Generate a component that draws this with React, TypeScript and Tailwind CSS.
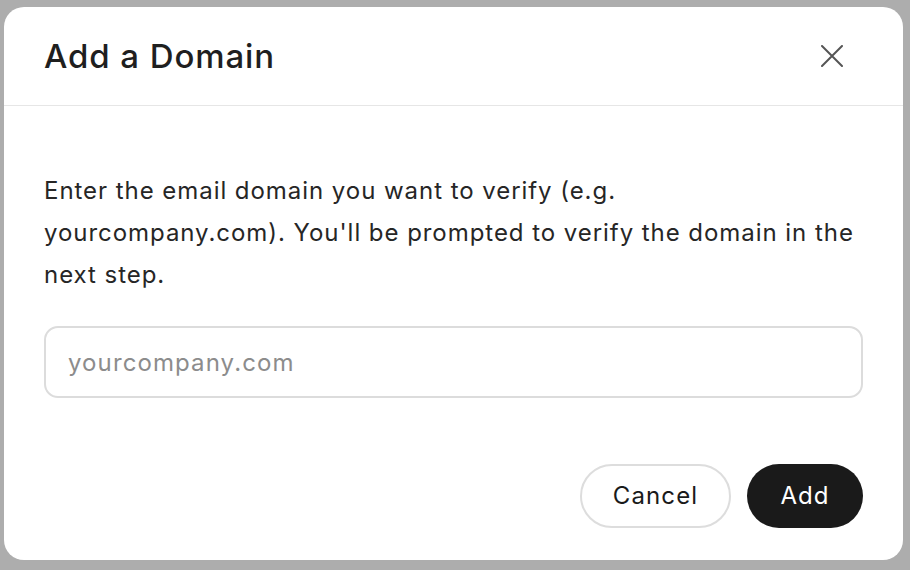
import React, { useState } from 'react';

const App: React.FC = () => {
  const [domain, setDomain] = useState('');

  return (
    <div
      className="w-[910px] h-[570px] bg-[#adadad] pt-[7px] pl-[4px]"
      style={{ fontFamily: 'Inter, "Noto Sans", sans-serif' }}
    >
      <div className="w-[899px] h-[553px] bg-white rounded-[20px] flex flex-col">
        <div className="h-[99px] flex items-center justify-between pl-[40px] pr-[60px] border-b border-[#e6e6e6]">
          <h1 className="text-[33px] font-medium text-[#1f1f1f] tracking-[0.9px] pt-[2px]">Add a Domain</h1>
          <button className="w-[22px] h-[22px] flex items-center justify-center text-[#555555]">
            <svg width="22" height="22" viewBox="0 0 22 22" fill="none">
              <path d="M1 1L21 21M21 1L1 21" stroke="currentColor" strokeWidth="2" strokeLinecap="round" />
            </svg>
          </button>
        </div>

        <div className="px-[40px] pt-[64px] flex flex-col">
          <p className="text-[24px] leading-[42px] text-[#262626] tracking-[0.95px]">
            Enter the email domain you want to verify (e.g. yourcompany.com). You'll be prompted to verify the domain in the next step.
          </p>

          <input
            type="text"
            value={domain}
            onChange={(e) => setDomain(e.target.value)}
            placeholder="yourcompany.com"
            className="mt-[30px] h-[72px] w-full rounded-[14px] border-2 border-[#dcdcdc] px-[22px] text-[24px] tracking-[1.1px] text-[#262626] placeholder:text-[#8c8c8c] focus:outline-none"
          />

          <div className="mt-[66px] flex justify-end gap-[16px]">
            <button className="h-[64px] w-[151px] rounded-full border-2 border-[#dddddd] bg-white text-[24px] tracking-[1.1px] text-[#1a1a1a]">
              Cancel
            </button>
            <button className="h-[64px] w-[116px] rounded-full bg-[#1a1a1a] text-[24px] tracking-[1.1px] text-white">
              Add
            </button>
          </div>
        </div>
      </div>
    </div>
  );
};

export default App;
